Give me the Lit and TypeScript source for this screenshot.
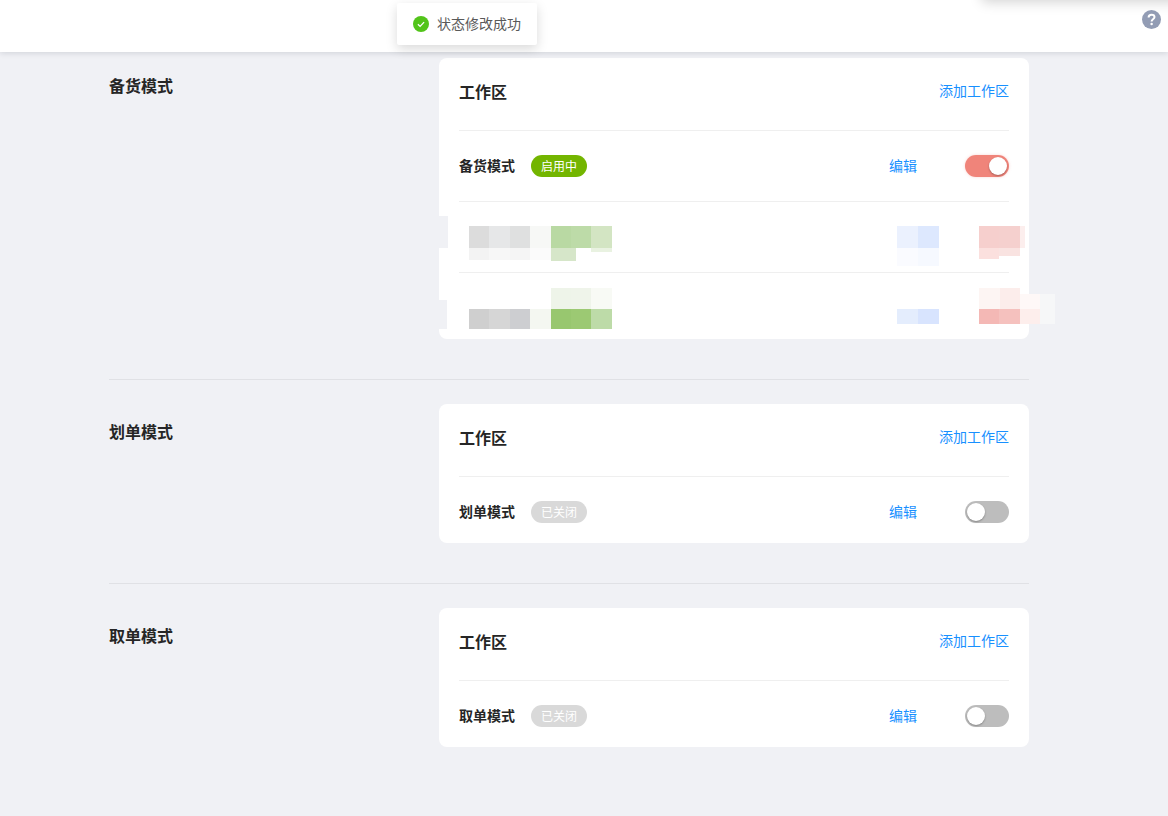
import { LitElement, html, css } from "lit";
import { customElement } from "lit/decorators.js";

type Patch = [number, number, number, number, string];

const CARD_X = 439;
const CARD_Y = 58;

// Pixelated redaction over the first card's rows: [x, y, w, h, colour] in page coordinates.
const PATCHES: Patch[] = [
  [469, 226, 20, 22, "#dcdcdc"], [489, 226, 21, 22, "#e6e7e8"], [510, 226, 20, 22, "#dfe0e0"], [530, 226, 21, 22, "#f7f8f6"],
  [551, 226, 20, 22, "#b9d9a3"], [571, 226, 20, 22, "#bddba8"], [591, 226, 21, 22, "#d3e5c3"],
  [469, 248, 20, 12, "#f3f3f3"], [489, 248, 21, 12, "#f7f7f7"], [510, 248, 20, 12, "#f5f5f5"], [530, 248, 21, 12, "#fbfbfb"],
  [551, 248, 25, 13, "#d6e6c9"], [591, 248, 21, 4, "#e9f2e1"],
  [551, 288, 20, 21, "#eef4e9"], [571, 288, 20, 21, "#eff4ea"], [591, 288, 21, 21, "#f8faf5"],
  [469, 309, 20, 20, "#cfcfcf"], [489, 309, 21, 20, "#d6d6d6"], [510, 309, 20, 20, "#cdced1"], [530, 309, 21, 20, "#f4f7f1"],
  [551, 309, 20, 20, "#98c76f"], [571, 309, 20, 20, "#9cc973"], [591, 309, 21, 20, "#bddba8"],
  [897, 226, 21, 22, "#ebf1fe"], [918, 226, 21, 22, "#dde8fe"], [897, 248, 21, 18, "#fafbff"], [918, 248, 21, 18, "#f6f9ff"],
  [897, 309, 21, 15, "#e4edfd"], [918, 309, 21, 15, "#d8e4fe"],
  [979, 226, 20, 22, "#f6cfcd"], [999, 226, 21, 22, "#f5d0ce"], [1020, 226, 5, 22, "#fceeed"],
  [979, 248, 20, 11, "#fbe0de"], [999, 248, 21, 8, "#f9e3e1"],
  [979, 288, 21, 21, "#fdf5f3"], [1000, 288, 20, 21, "#fcedeb"], [1020, 294, 20, 15, "#fef8f7"],
  [979, 309, 20, 15, "#f4b8b5"], [999, 309, 21, 15, "#f5c1be"], [1020, 309, 20, 15, "#fdeeec"],
  [1040, 294, 15, 30, "#f6f7f8"],
];

// Places where the redaction cut into the card's left edge.
const NOTCHES: Patch[] = [
  [439, 216, 9, 32, "#f0f1f5"],
  [439, 300, 8, 29, "#f0f1f5"],
];

interface Row { name: string; on: boolean; }
interface Section { title: string; rows: (Row | null)[]; patched?: boolean; }

const SECTIONS: Section[] = [
  { title: "备货模式", rows: [{ name: "备货模式", on: true }, null, null], patched: true },
  { title: "划单模式", rows: [{ name: "划单模式", on: false }] },
  { title: "取单模式", rows: [{ name: "取单模式", on: false }] },
];

@customElement("app-root")
export class AppRoot extends LitElement {
  static styles = css`
    :host {
      display: block;
      position: relative;
      height: 816px;
      overflow: hidden;
      background: #f0f1f5;
      font-family: "Noto Sans CJK SC", "Noto Sans", sans-serif;
      color: #262626;
    }
    .header {
      position: relative;
      z-index: 2;
      height: 52px;
      background: #fff;
      box-shadow: 0 1px 6px rgba(0, 21, 41, 0.14);
    }
    .dropdown {
      position: absolute;
      top: -100px;
      left: 982px;
      width: 240px;
      height: 100px;
      background: #fff;
      box-shadow: 0 2px 12px rgba(0, 0, 0, 0.18);
    }
    .help {
      position: absolute;
      left: 1142px;
      top: 10px;
      width: 19px;
      height: 19px;
      display: block;
    }
    .toast {
      position: absolute;
      z-index: 3;
      left: 397px;
      top: 3px;
      width: 140px;
      height: 42px;
      box-sizing: border-box;
      padding-left: 16px;
      display: flex;
      align-items: center;
      gap: 8px;
      background: #fff;
      border-radius: 2px;
      box-shadow: 0 4px 12px rgba(0, 0, 0, 0.15);
      font-size: 14px;
      color: #595959;
      white-space: nowrap;
    }
    .toast svg { width: 16px; height: 16px; display: block; flex: none; }
    .toast span { padding-bottom: 2px; }
    .main { width: 920px; margin-left: 109px; padding-top: 6px; }
    .section {
      display: flex;
      padding-bottom: 40px;
      margin-bottom: 24px;
      border-bottom: 1px solid #e0e1e5;
    }
    .section:last-child { border-bottom: none; }
    .section-title {
      width: 330px;
      flex: none;
      padding-top: 16px;
      font-size: 16px;
      line-height: 22px;
      font-weight: 700;
    }
    .card {
      position: relative;
      width: 590px;
      box-sizing: border-box;
      padding: 0 20px;
      background: #fff;
      border-radius: 8px;
    }
    .card-head {
      display: flex;
      justify-content: space-between;
      align-items: center;
      height: 64px;
      padding-bottom: 8px;
      border-bottom: 1px solid #efefef;
      box-sizing: content-box;
    }
    .card-title { font-size: 16px; font-weight: 700; line-height: 22px; padding-top: 2px; }
    a { color: #1890ff; font-size: 14px; line-height: 22px; text-decoration: none; white-space: nowrap; }
    .row {
      display: flex;
      align-items: center;
      height: 22px;
      padding: 24px 0;
      border-bottom: 1px solid #efefef;
    }
    .row.last { border-bottom: none; padding-bottom: 20px; }
    .row-name { font-size: 14px; font-weight: 700; line-height: 20px; padding-bottom: 2px; white-space: nowrap; }
    .badge {
      margin-left: 16px;
      width: 56px;
      height: 22px;
      border-radius: 11px;
      text-align: center;
      font-size: 12px;
      line-height: 21px;
      color: #fff;
      background: #d9d9d9;
    }
    .badge.on { background: #73b500; }
    .row a { margin-left: auto; line-height: 20px; padding-bottom: 2px; }
    .switch {
      position: relative;
      margin-left: 48px;
      width: 44px;
      height: 22px;
      border-radius: 11px;
      background: #bdbdbd;
    }
    .switch.on { background: #f0847a; box-shadow: 0 0 3px rgba(240, 132, 122, 0.35); }
    .knob {
      position: absolute;
      left: 2px;
      top: 2px;
      width: 18px;
      height: 18px;
      border-radius: 50%;
      background: #fff;
      box-shadow: 0 1px 2px rgba(0, 0, 0, 0.3);
    }
    .switch.on .knob { left: 24px; }
    .mosaic {
      position: absolute;
      left: 0;
      top: 0;
      width: 0;
      height: 0;
      filter: blur(0.6px);
    }
    .patch { position: absolute; }
  `;

  private patch(p: Patch) {
    const [x, y, w, h, c] = p;
    return html`<div
      class="patch"
      style="left:${x - CARD_X}px;top:${y - CARD_Y}px;width:${w}px;height:${h}px;background:${c}"
    ></div>`;
  }

  private row(r: Row | null, last: boolean) {
    const cls = last ? "row last" : "row";
    if (!r) return html`<div class=${cls}></div>`;
    return html`<div class=${cls}>
      <span class="row-name">${r.name}</span>
      <span class="badge ${r.on ? "on" : ""}">${r.on ? "启用中" : "已关闭"}</span>
      <a href="#">编辑</a>
      <span class="switch ${r.on ? "on" : ""}"><span class="knob"></span></span>
    </div>`;
  }

  render() {
    return html`
      <header class="header">
        <div class="dropdown"></div>
        <svg class="help" viewBox="0 0 19 19">
          <circle cx="9.5" cy="9.5" r="9.5" fill="#929cb4"></circle>
          <path d="M6.6 7.4c0-1.7 1.3-2.7 3-2.7s2.9 1 2.9 2.4c0 2.2-2.9 2.2-2.9 4.3" fill="none" stroke="#fff" stroke-width="2"></path>
          <circle cx="9.6" cy="14.1" r="1.25" fill="#fff"></circle>
        </svg>
      </header>
      <div class="toast">
        <svg viewBox="0 0 16 16">
          <circle cx="8" cy="8" r="8" fill="#52c41a"></circle>
          <path d="M4.9 8.2l2.2 2.2 4-4.3" fill="none" stroke="#fff" stroke-width="1.3"></path>
        </svg>
        <span>状态修改成功</span>
      </div>
      <main class="main">
        ${SECTIONS.map(
          (s) => html`<section class="section">
            <div class="section-title">${s.title}</div>
            <div class="card">
              <div class="card-head">
                <span class="card-title">工作区</span>
                <a href="#">添加工作区</a>
              </div>
              ${s.rows.map((r, i) => this.row(r, i === s.rows.length - 1))}
              ${s.patched
                ? html`<div class="mosaic">${PATCHES.map((p) => this.patch(p))}</div>
                    ${NOTCHES.map((p) => this.patch(p))}`
                : ""}
            </div>
          </section>`
        )}
      </main>
    `;
  }
}
